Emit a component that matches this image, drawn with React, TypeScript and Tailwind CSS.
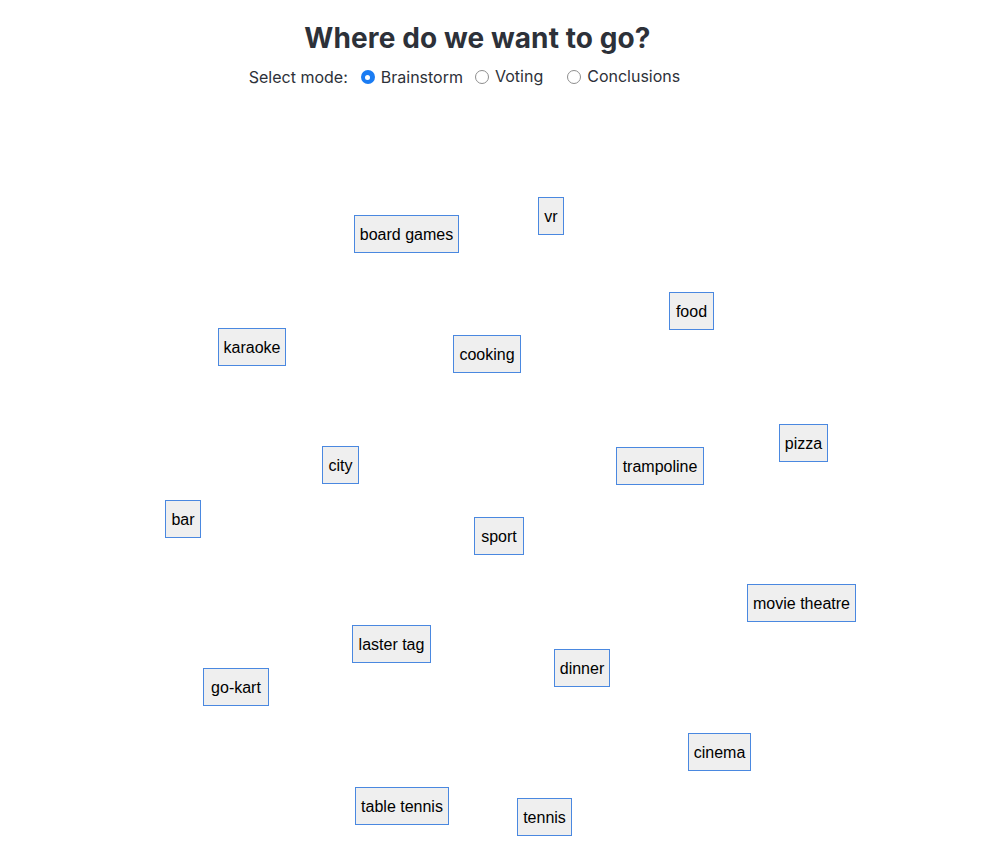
import React, { useState } from "react";

type Idea = { label: string; x: number; y: number; w: number };

const ideas: Idea[] = [
  { label: "board games", x: 354, y: 215, w: 105 },
  { label: "vr", x: 538, y: 197, w: 26 },
  { label: "food", x: 669, y: 292, w: 45 },
  { label: "karaoke", x: 218, y: 328, w: 68 },
  { label: "cooking", x: 453, y: 335, w: 68 },
  { label: "city", x: 322, y: 446, w: 37 },
  { label: "trampoline", x: 616, y: 447, w: 88 },
  { label: "pizza", x: 779, y: 424, w: 49 },
  { label: "bar", x: 165, y: 500, w: 36 },
  { label: "sport", x: 474, y: 517, w: 50 },
  { label: "movie theatre", x: 747, y: 584, w: 109 },
  { label: "laster tag", x: 352, y: 625, w: 79 },
  { label: "dinner", x: 554, y: 649, w: 56 },
  { label: "go-kart", x: 203, y: 668, w: 66 },
  { label: "cinema", x: 688, y: 733, w: 63 },
  { label: "table tennis", x: 355, y: 787, w: 94 },
  { label: "tennis", x: 517, y: 798, w: 55 },
];

const modes = ["Brainstorm", "Voting", "Conclusions"];

const Radio = ({ checked }: { checked: boolean }) =>
  checked ? (
    <span className="inline-flex items-center justify-center w-[14px] h-[14px] rounded-full bg-[#1a7cf3]">
      <span className="w-[5px] h-[5px] rounded-full bg-white" />
    </span>
  ) : (
    <span className="inline-block w-[14px] h-[14px] rounded-full border border-[#8e8e8e] bg-white" />
  );

const App = () => {
  const [mode, setMode] = useState("Brainstorm");

  return (
    <div className="relative w-full h-[855px] bg-white overflow-hidden font-['Inter',sans-serif] text-[#2d3139]">
      <div className="w-[955px] flex flex-col items-center pt-[20px]">
        <h1 className="text-[28px] leading-[36px] font-bold tracking-[0.1px]">Where do we want to go?</h1>
        <div className="flex items-center mt-[11px] mr-[26px] text-[16px] leading-[20px]">
          <span className="mr-[13px]">Select mode:</span>
          {modes.map((m, i) => (
            <label
              key={m}
              onClick={() => setMode(m)}
              className={`flex items-center gap-[6px] cursor-pointer ${i === 0 ? "mr-[12px]" : i === 1 ? "mr-[24px]" : ""}`}
            >
              <Radio checked={mode === m} />
              <span className={i === 0 ? "" : "-mt-[2px]"}>{m}</span>
            </label>
          ))}
        </div>
      </div>

      {ideas.map((idea) => (
        <div
          key={idea.label}
          className="absolute h-[38px] flex items-center justify-center pt-[2px] bg-[#efefef] border border-[#4a88e0] text-black text-[16px] font-['Liberation_Sans',Arial,sans-serif] whitespace-nowrap"
          style={{ left: idea.x, top: idea.y, width: idea.w }}
        >
          {idea.label}
        </div>
      ))}
    </div>
  );
};

export default App;
